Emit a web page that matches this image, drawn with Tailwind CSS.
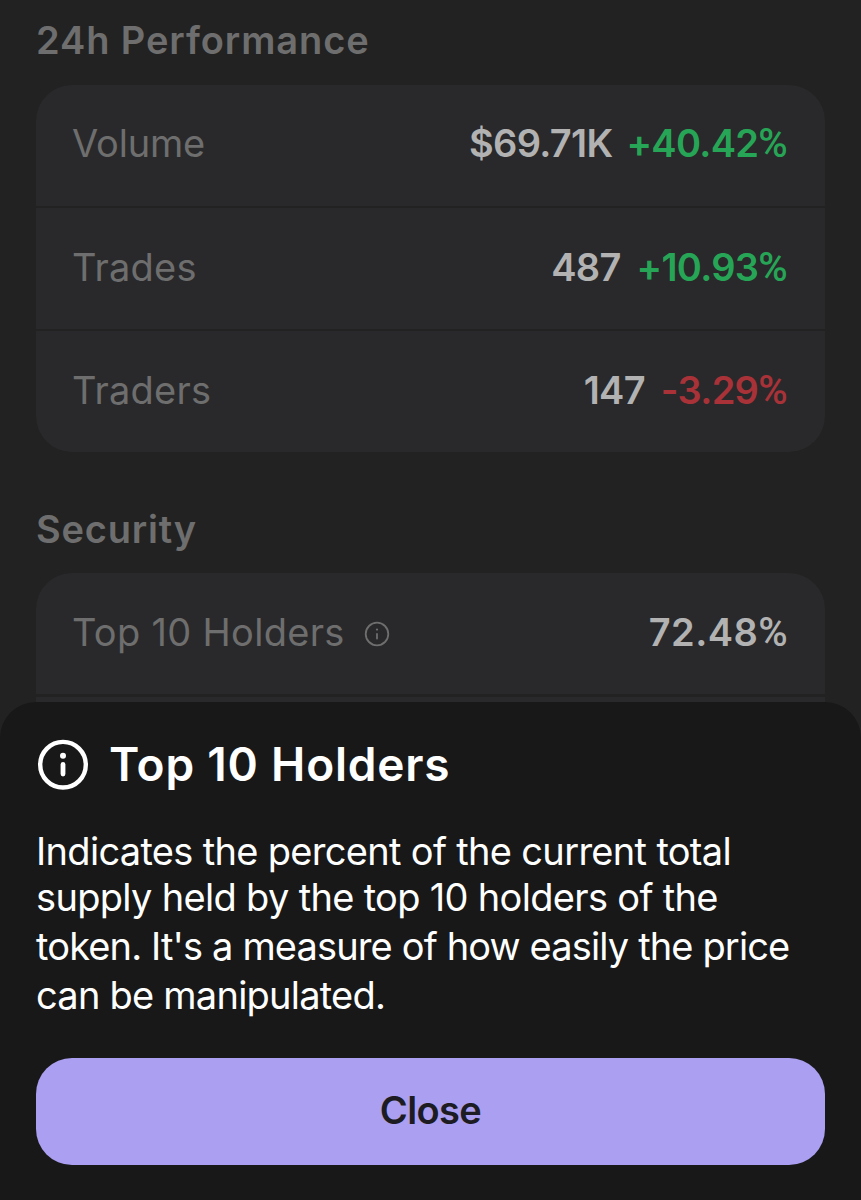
<!DOCTYPE html>
<html lang="en">

<head>
    <meta charset="UTF-8">
    <title>Token details</title>
    <script src="https://cdn.jsdelivr.net/npm/@tailwindcss/browser@4"></script>
</head>

<body class="bg-[#222222] font-['Inter',sans-serif] w-[861px] h-[1200px] overflow-hidden relative">
    <main class="px-9">
        <h2 class="pt-[15px] h-[85px] text-[38px] leading-[50px] font-semibold text-[#6e6e6e] tracking-[0.9px]">24h Performance</h2>
        <div class="rounded-[36px] overflow-hidden flex flex-col gap-[2px] text-[38px] leading-[57px]">
            <div class="bg-[#29292b] h-[121px] pl-9 pr-[38px] pb-1 flex items-center justify-between">
                <span class="text-[#6e6e6e] tracking-[-0.2px]">Volume</span>
                <div class="flex gap-[14px] font-semibold tracking-[-0.7px]">
                    <span class="text-[#b2b2b2]">$69.71K</span>
                    <span class="text-[#27a556]">+40.42<span class="font-['Roboto'] font-medium text-[40px] leading-none">%</span></span>
                </div>
            </div>
            <div class="bg-[#29292b] h-[121px] pl-9 pr-[38px] pb-[2px] flex items-center justify-between">
                <span class="text-[#6e6e6e] tracking-[0.2px]">Trades</span>
                <div class="flex gap-4 font-semibold tracking-[-0.7px]">
                    <span class="text-[#b2b2b2]">487</span>
                    <span class="text-[#27a556]">+10.93<span class="font-['Roboto'] font-medium text-[40px] leading-none">%</span></span>
                </div>
            </div>
            <div class="bg-[#29292b] h-[121px] pl-9 pr-[38px] pb-[2px] flex items-center justify-between">
                <span class="text-[#6e6e6e] tracking-[0.2px]">Traders</span>
                <div class="flex gap-4 font-semibold tracking-[-0.7px]">
                    <span class="text-[#b2b2b2]">147</span>
                    <span class="text-[#a83238]">-3.29<span class="font-['Roboto'] font-medium text-[40px] leading-none">%</span></span>
                </div>
            </div>
        </div>
        <h2 class="pt-[52px] h-[121px] text-[38px] leading-[50px] font-semibold text-[#6e6e6e] tracking-[0.8px]">Security</h2>
        <div class="rounded-t-[36px] overflow-hidden flex flex-col gap-[3px] text-[38px] leading-[57px]">
            <div class="bg-[#29292b] h-[121px] pl-9 pr-[37px] pb-[2px] flex items-center justify-between">
                <div class="flex items-center gap-[19px] text-[#6e6e6e]">
                    <span class="tracking-[0.3px]">Top 10 Holders</span>
                    <svg class="size-[26px] mt-[2px]" viewBox="0 0 26 26" fill="none" stroke="currentColor" stroke-width="1.8" stroke-linecap="round">
                        <circle cx="13" cy="13" r="11.3" />
                        <path d="M13 13v4.5" />
                        <circle cx="13" cy="8.6" r="1.1" fill="currentColor" stroke="none" />
                    </svg>
                </div>
                <span class="font-semibold text-[#b2b2b2] tracking-[0.4px]">72.48<span class="font-['Roboto'] font-medium text-[40px] leading-none">%</span></span>
            </div>
            <div class="bg-[#29292b] h-[121px]"></div>
        </div>
    </main>
    <section class="absolute inset-x-0 top-[702px] bottom-0 bg-[#181818] rounded-t-[36px] px-9 pt-9 text-white">
        <div class="flex items-center gap-[19px] h-[54px]">
            <svg class="size-[54px]" viewBox="0 0 54 54" fill="none" stroke="currentColor" stroke-width="4.4" stroke-linecap="round">
                <circle cx="27" cy="26.7" r="22.8" />
                <path d="M27 26.5v9.5" stroke-width="4.8" />
                <circle cx="27" cy="17.7" r="3" fill="currentColor" stroke="none" />
            </svg>
            <h3 class="text-[46px] font-semibold tracking-[0.8px] -mt-[2px]">Top 10 Holders</h3>
        </div>
        <p class="mt-[35px] h-[231px] text-[38px] leading-[49px] tracking-[-0.68px] whitespace-nowrap">
            <span class="block">Indicates the percent of the current total</span>
            <span class="block -mt-[3px]">supply held by the top 10 holders of the</span>
            <span class="block tracking-[-0.86px]">token. It's a measure of how easily the price</span>
            <span class="block tracking-[-0.76px]">can be manipulated.</span>
        </p>
        <button class="block w-full h-[107px] pb-[2px] rounded-[36px] bg-[#ab9ff2] text-[#1c1c22] text-[38px] font-semibold tracking-[-0.6px]">Close</button>
    </section>
</body>

</html>
